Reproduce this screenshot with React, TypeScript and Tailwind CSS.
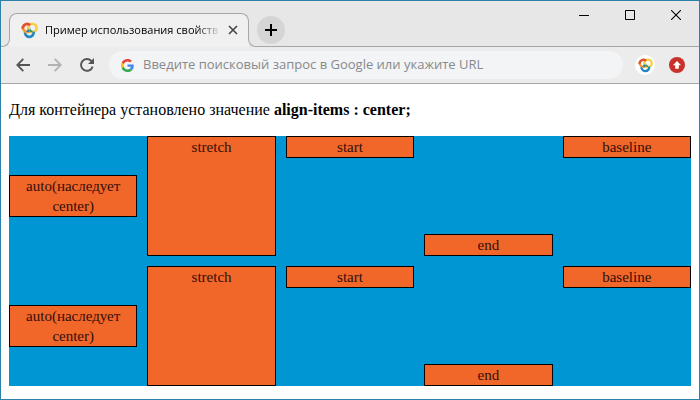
import React from "react";

function RingsLogo({ className }: { className: string }) {
  return (
    <svg viewBox="0 0 18 18" className={className} fill="none" strokeWidth="2.8" aria-hidden="true">
      <circle cx="12" cy="6.4" r="4.5" stroke="#f6cf45" />
      <path d="M4.6 9.4A4.6 4.6 0 1 0 13.4 10.4" stroke="#2186c4" />
      <path d="M9.8 9A4.5 4.5 0 0 1 2.2 4.6" stroke="#f39a35" />
      <path d="M2 7A4.5 4.5 0 0 1 9.6 3.4" stroke="#e2502f" />
      <path d="M9.4 5.4 10.4 8.4 13 9.4 11 10.8 9.2 10Z" fill="#3f8a4f" />
      <path d="M5.4 10.2 7.4 7.6 9 8.6 8.4 10.8Z" fill="#2d7fa0" />
    </svg>
  );
}

function GoogleLogo() {
  return (
    <svg viewBox="0 0 48 48" className="size-[13px] shrink-0" aria-hidden="true">
      <path fill="#EA4335" d="M24 9.5c3.54 0 6.71 1.22 9.21 3.6l6.85-6.85C35.9 2.38 30.47 0 24 0 14.62 0 6.51 5.38 2.56 13.22l7.98 6.19C12.43 13.72 17.74 9.5 24 9.5z" />
      <path fill="#4285F4" d="M46.98 24.55c0-1.57-.15-3.09-.38-4.55H24v9.02h12.94c-.58 2.96-2.26 5.48-4.78 7.18l7.73 6c4.51-4.18 7.09-10.36 7.09-17.65z" />
      <path fill="#FBBC05" d="M10.53 28.59c-.48-1.45-.76-2.99-.76-4.59s.27-3.14.76-4.59l-7.98-6.19C.92 16.46 0 20.12 0 24s.92 7.54 2.56 10.78l7.97-6.19z" />
      <path fill="#34A853" d="M24 48c6.48 0 11.93-2.13 15.89-5.81l-7.73-6c-2.15 1.45-4.92 2.3-8.16 2.3-6.26 0-11.57-4.22-13.47-9.91l-7.98 6.19C6.51 42.62 14.62 48 24 48z" />
    </svg>
  );
}

function TabStrip() {
  return (
    <div className="flex h-[46px] bg-[#e7e7e7]">
      <div className="z-10 -mr-px h-6 w-[9px] shrink-0 self-end rounded-br-lg border-r border-b border-[#a3a7a9]" />
      <div className="relative mt-3 flex w-60 shrink-0 items-center rounded-t-lg bg-[#f0f0f0] pr-2 pl-3">
        <span className="absolute inset-x-0 top-0 h-3 rounded-t-lg border border-b-0 border-[#a3a7a9]" />
        <RingsLogo className="size-[17px] shrink-0" />
        <span className="ml-[7px] flex-1 whitespace-nowrap font-['Open_Sans','Noto_Sans',sans-serif] text-[11px] text-black [mask-image:linear-gradient(to_right,black_86%,transparent)]">
          Пример использования свойств
        </span>
        <button type="button" aria-label="Закрыть вкладку" className="ml-1 flex size-4 items-center justify-center">
          <svg viewBox="0 0 10 10" className="size-[10px]" stroke="#444" strokeWidth="1.6" aria-hidden="true">
            <path d="M1 1 9 9M9 1 1 9" />
          </svg>
        </button>
      </div>
      <div className="relative -ml-px flex flex-1 justify-between">
        <span className="absolute inset-x-0 bottom-0 h-[25px] rounded-bl-lg border-b border-l border-[#a3a7a9]" />
        <button type="button" aria-label="Новая вкладка" className="relative mt-[15px] ml-[9px] flex size-7 items-center justify-center rounded-full bg-[#d5d5d5]">
          <svg viewBox="0 0 12 12" className="size-3" stroke="#000" strokeWidth="2" aria-hidden="true">
            <path d="M6 0V12M0 6H12" />
          </svg>
        </button>
        <div className="relative flex h-7 text-black">
          <button type="button" aria-label="Свернуть" className="flex w-[46px] items-center justify-center">
            <svg viewBox="0 0 10 10" className="size-[10px]" stroke="currentColor" aria-hidden="true">
              <path d="M0 5.5H10" />
            </svg>
          </button>
          <button type="button" aria-label="Развернуть" className="flex w-[46px] items-center justify-center">
            <svg viewBox="0 0 10 10" className="size-[10px]" fill="none" stroke="currentColor" aria-hidden="true">
              <path d="M.5 .5H9.5V9.5H.5Z" />
            </svg>
          </button>
          <button type="button" aria-label="Закрыть" className="flex w-[46px] items-center justify-center">
            <svg viewBox="0 0 10 10" className="size-[10px]" stroke="currentColor" strokeWidth="1.1" aria-hidden="true">
              <path d="M0 0 10 10M10 0 0 10" />
            </svg>
          </button>
        </div>
      </div>
    </div>
  );
}

function Toolbar() {
  return (
    <div className="flex h-[37px] items-center border-b border-[#a3a7a9] bg-[#ececec] px-[14px]">
      <button type="button" aria-label="Назад" className="flex size-4 items-center justify-center">
        <svg viewBox="0 0 14 14" className="size-[14px]" fill="none" stroke="#555" strokeWidth="1.8" aria-hidden="true">
          <path d="M14 7H1.5M7.3 .9 1.3 7 7.3 13.1" />
        </svg>
      </button>
      <button type="button" aria-label="Вперёд" className="ml-4 flex size-4 items-center justify-center">
        <svg viewBox="0 0 14 14" className="size-[14px]" fill="none" stroke="#b2b2b2" strokeWidth="1.8" aria-hidden="true">
          <path d="M0 7H12.5M6.7 .9 12.7 7 6.7 13.1" />
        </svg>
      </button>
      <button type="button" aria-label="Обновить" className="ml-4 flex size-4 items-center justify-center">
        <svg viewBox="0 0 14 14" className="size-[14px]" fill="none" stroke="#555" strokeWidth="1.9" aria-hidden="true">
          <path d="M12.6 8.6A5.9 5.9 0 1 1 11.3 2.9L12 3.7" />
          <path d="M14 0V6H8Z" fill="#555" stroke="none" />
        </svg>
      </button>
      <label className="ml-[14px] flex h-7 flex-1 items-center rounded-full bg-[#f3f4f5] pl-3">
        <GoogleLogo />
        <input
          type="text"
          aria-label="Адресная строка"
          placeholder="Введите поисковый запрос в Google или укажите URL"
          className="ml-[9px] min-w-0 flex-1 bg-transparent font-['Open_Sans','Noto_Sans',sans-serif] text-[13px] outline-none placeholder:text-[#868a8d]"
        />
      </label>
      <button type="button" aria-label="Расширение" className="ml-3 flex size-5 items-center justify-center rounded-full bg-white">
        <RingsLogo className="size-[15px]" />
      </button>
      <button type="button" aria-label="Доступно обновление" className="ml-[14px] flex size-4 items-center justify-center rounded-full bg-[#c8322b]">
        <svg viewBox="0 0 10 10" className="size-[10px]" fill="#fff" aria-hidden="true">
          <path d="M5 1 9 5.2H6.8V8.8H3.2V5.2H1Z" />
        </svg>
      </button>
    </div>
  );
}

const items = [
  { text: "auto(наследует center)", align: "self-auto" },
  { text: "stretch", align: "self-stretch" },
  { text: "start", align: "self-start" },
  { text: "end", align: "self-end" },
  { text: "baseline", align: "self-baseline" },
];

export default function App() {
  return (
    <div className="flex min-h-screen flex-col border border-[#2b82a8] bg-white">
      <header>
        <TabStrip />
        <Toolbar />
      </header>
      <main className="px-2 pt-4 pb-3 font-['Liberation_Serif',serif] text-[15px] leading-5 text-black">
        <p className="text-base leading-5">
          Для контейнера установлено значение <b>align-items : center;</b>
        </p>
        <div className="mt-4 grid auto-rows-[120px] grid-cols-5 items-center gap-[10px] bg-[#0095d3] text-center text-[#33100a]">
          {[...items, ...items].map((item, i) => (
            <div key={i} className={`border border-black bg-[#f16629] ${item.align}`}>
              {item.text}
            </div>
          ))}
        </div>
      </main>
    </div>
  );
}
